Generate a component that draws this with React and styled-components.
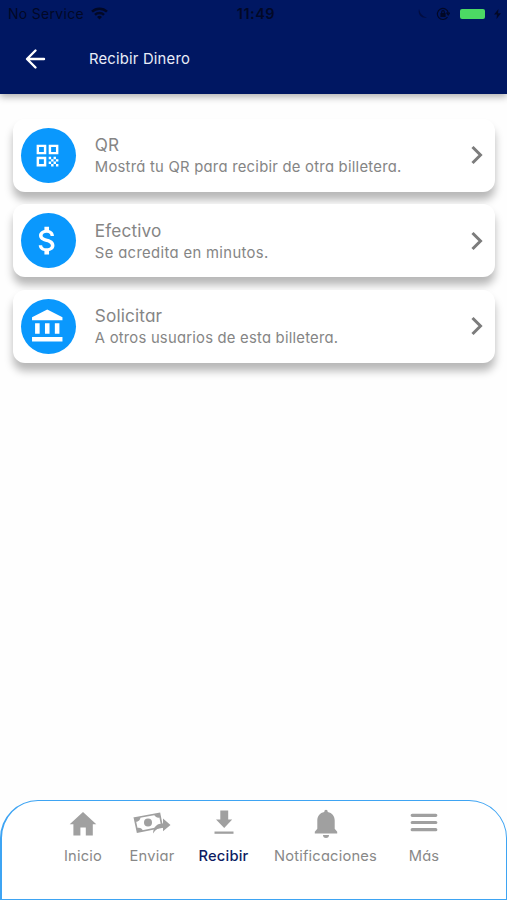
import React from 'react';
import styled, { createGlobalStyle, css } from 'styled-components';
import { MdQrCode, MdAttachMoney, MdAccountBalance } from 'react-icons/md';

const GlobalStyle = createGlobalStyle`
  * {
    box-sizing: border-box;
  }
  body {
    margin: 0;
    background: #fefefe;
    font-family: Inter, "Open Sans", sans-serif;
    font-feature-settings: "cv11";
  }
`;

const Screen = styled.div`
  display: flex;
  flex-direction: column;
  width: 507px;
  height: 900px;
  overflow: hidden;
`;

const Header = styled.header`
  flex: none;
  height: 93.5px;
  background: #001762;
  box-shadow: 0 3px 7px rgba(0, 0, 0, 0.3);
`;

const StatusBar = styled.div`
  display: grid;
  grid-template-columns: 1fr auto 1fr;
  align-items: center;
  height: 27px;
  padding: 0 6px 0 8px;
  color: #020826;
  font-size: 14px;
`;

const Carrier = styled.div`
  display: flex;
  align-items: center;
  gap: 7px;
  letter-spacing: 0.3px;
`;

const Clock = styled.div`
  padding-left: 3px;
  font-size: 14.5px;
  font-weight: 600;
  letter-spacing: 0.5px;
`;

const Indicators = styled.div`
  display: flex;
  justify-content: flex-end;
  align-items: center;
`;

const Battery = styled.span`
  width: 25px;
  height: 10px;
  margin: 0 9px 0 10px;
  border-radius: 2px;
  background: #4cd964;
`;

const TitleBar = styled.div`
  display: flex;
  align-items: center;
  gap: 43px;
  height: 64px;
  padding-left: 25px;
`;

const Title = styled.h1`
  margin: 0;
  color: #e9edf8;
  font-size: 14.8px;
  font-weight: 400;
  letter-spacing: 0.2px;
`;

const Options = styled.main`
  flex: 1;
  display: flex;
  flex-direction: column;
  gap: 12.3px;
  padding: 25.3px 12.5px 0 13px;
`;

const Card = styled.div`
  position: relative;
  display: flex;
  align-items: center;
  height: 73.2px;
  padding: 0 10.5px 0 7.5px;
  border-radius: 12px;
  background: #fff;
  box-shadow: 0 8px 9px rgba(0, 0, 0, 0.28);
`;

const Circle = styled.div`
  flex: none;
  display: flex;
  align-items: center;
  justify-content: center;
  width: 55px;
  height: 55px;
  border-radius: 50%;
  background: #0a98fd;
  color: #fff;

  svg {
    margin-right: 1px;
  }
`;

const CardText = styled.div`
  flex: 1;
  padding: 1px 0 0 19.3px;
  color: #858585;
  white-space: nowrap;
`;

const CardTitle = styled.div`
  font-size: 17.2px;
  line-height: 23px;
  letter-spacing: 0.15px;
`;

const CardDescription = styled.div`
  font-size: 14.8px;
  line-height: 22px;
  letter-spacing: ${props => props.$spacing}px;
`;

const TabBar = styled.nav`
  flex: none;
  display: grid;
  grid-template-columns: 68px 70px 73px 131px 66px;
  height: 100.5px;
  padding: 8px 0 0 47px;
  border: 1.5px solid #3ea4f3;
  border-left-width: 2px;
  border-radius: 38px 38px 0 0;
  background: #fff;
`;

const Tab = styled.div`
  display: flex;
  flex-direction: column;
  align-items: center;
  color: #888;
  font-size: 14.7px;
  letter-spacing: 0.2px;
  white-space: nowrap;

  svg {
    flex: none;
    height: 30px;
    color: #a0a0a0;
  }

  ${props => props.$active && css`
    color: #0d1b62;
    font-weight: 500;
  `}
`;

const TabLabel = styled.span`
  margin-top: 7.5px;
  line-height: 20px;
`;

const BackIcon = () => (
  <svg width="21" height="22" viewBox="0 0 21 22" fill="none" stroke="#fff" strokeWidth="2.4" strokeLinecap="round" strokeLinejoin="round">
    <path d="M19 11H2.5M10.5 2.5L2 11l8.500 8.500" />
  </svg>
);

const WifiIcon = () => (
  <svg width="17" height="13" viewBox="0 0 17 13" fill="none" stroke="currentColor" strokeWidth="2.500">
    <path d="M1 4.700a10.800 10.800 0 0 1 15 0M4 7.900a6.500 6.500 0 0 1 9 0" />
    <path d="M8.500 12.500L6 10a3.600 3.600 0 0 1 5 0z" fill="currentColor" stroke="none" />
  </svg>
);

const MoonIcon = () => (
  <svg width="9" height="11" viewBox="0 0 9 11" fill="#020d40">
    <path d="M1 1C-.5 6 3 11 9 9.500 4.500 8.500 2 5.500 1 1z" />
  </svg>
);

const LockIcon = () => (
  <svg width="14" height="14" viewBox="0 0 14 14" fill="none" stroke="currentColor" strokeWidth="1.200" style={{ marginLeft: 9 }}>
    <path d="M11.500 10A5.500 5.500 0 1 1 12.300 6M10.800 6h2.800L12.200 8z" />
    <path d="M5 6.500h4v3H5z" fill="currentColor" />
    <path d="M5.700 6.500V5a1.300 1.300 0 0 1 2.600 0v1.500" />
  </svg>
);

const BoltIcon = () => (
  <svg width="7" height="10" viewBox="0 0 7 10" fill="currentColor">
    <path d="M4.500 0L0 5.500h3L2.500 10 7 4.300H4z" />
  </svg>
);

const ChevronIcon = () => (
  <svg width="14" height="20" viewBox="0 0 14 20" fill="none" stroke="#7c7c7c" strokeWidth="3">
    <path d="M2.500 2l8 8-8 8" />
  </svg>
);

const HomeIcon = () => (
  <svg width="28" height="30" viewBox="0 0 28 30" fill="currentColor">
    <path d="M14 3L27.300 15.200H23.800V26.500H16.800V18.500H11.400V26.500H4.400V15.200H.7z" />
  </svg>
);

const SendMoneyIcon = () => (
  <svg width="38" height="30" viewBox="0 0 38 30" fill="none" stroke="currentColor">
    <path d="M1.500 9L26.500 4.500l2.700 13.500L4.500 23z" strokeWidth="1.700" />
    <path d="M1.500 9l6-1c0 2.800-2 4.800-5 5zM26.500 4.500L21 5.500c1 2.500 3 3.500 6.200 3zM4.500 23l5.500-1.100c-1-2.600-3-3.700-6.200-3z" fill="currentColor" stroke="none" />
    <circle cx="15" cy="13.500" r="4" fill="currentColor" stroke="none" />
    <path d="M20 24.500c.5-7 4-10 10-10V9.500l7.500 6.500-7.500 6.200v-3.700c-4-.3-7 1.500-10 6z" fill="currentColor" stroke="none" />
  </svg>
);

const ReceiveIcon = () => (
  <svg width="20" height="30" viewBox="0 0 20 30" fill="currentColor">
    <path d="M6.300 1.500h7.900v9h4L10.200 19l-8.200-8.500h4.300z" />
    <path d="M.5 22.500h19v2.300H.5z" />
  </svg>
);

const BellIcon = () => (
  <svg width="24" height="30" viewBox="0 0 24 30" fill="currentColor">
    <path d="M10.300 3V2.400a1.700 1.700 0 0 1 3.400 0V3c4.600.8 7 4.200 7 8.600v8.200l2.500 3v1.700H.8v-1.700l2.500-3v-8.200C3.300 7.200 5.700 3.800 10.300 3z" />
    <path d="M9 26h6a3 3 0 0 1-6 0z" />
  </svg>
);

const MenuIcon = () => (
  <svg width="28" height="30" viewBox="0 0 28 30" fill="none" stroke="currentColor" strokeWidth="3.200" strokeLinecap="round">
    <path d="M2.200 6.300h23.600M2.200 13.500h23.600M2.200 20.700h23.600" />
  </svg>
);

const options = [
  {
    title: 'QR',
    description: 'Mostrá tu QR para recibir de otra billetera.',
    icon: <MdQrCode size={29} />,
    spacing: 0.25,
  },
  {
    title: 'Efectivo',
    description: 'Se acredita en minutos.',
    icon: <MdAttachMoney size={37} />,
    spacing: 0.36,
  },
  {
    title: 'Solicitar',
    description: 'A otros usuarios de esta billetera.',
    icon: <MdAccountBalance size={36.5} />,
    spacing: 0.23,
  },
];

const tabs = [
  { label: 'Inicio', icon: <HomeIcon /> },
  { label: 'Enviar', icon: <SendMoneyIcon /> },
  { label: 'Recibir', icon: <ReceiveIcon />, active: true },
  { label: 'Notificaciones', icon: <BellIcon /> },
  { label: 'Más', icon: <MenuIcon /> },
];

const App = () => {
  return (
    <>
      <GlobalStyle />
      <Screen>
        <Header>
          <StatusBar>
            <Carrier>
              No Service
              <WifiIcon />
            </Carrier>
            <Clock>11:49</Clock>
            <Indicators>
              <MoonIcon />
              <LockIcon />
              <Battery />
              <BoltIcon />
            </Indicators>
          </StatusBar>
          <TitleBar>
            <BackIcon />
            <Title>Recibir Dinero</Title>
          </TitleBar>
        </Header>

        <Options>
          {options.map(option => (
            <Card key={option.title}>
              <Circle>{option.icon}</Circle>
              <CardText>
                <CardTitle>{option.title}</CardTitle>
                <CardDescription $spacing={option.spacing}>{option.description}</CardDescription>
              </CardText>
              <ChevronIcon />
            </Card>
          ))}
        </Options>

        <TabBar>
          {tabs.map(tab => (
            <Tab key={tab.label} $active={tab.active}>
              {tab.icon}
              <TabLabel>{tab.label}</TabLabel>
            </Tab>
          ))}
        </TabBar>
      </Screen>
    </>
  );
};

export default App;
